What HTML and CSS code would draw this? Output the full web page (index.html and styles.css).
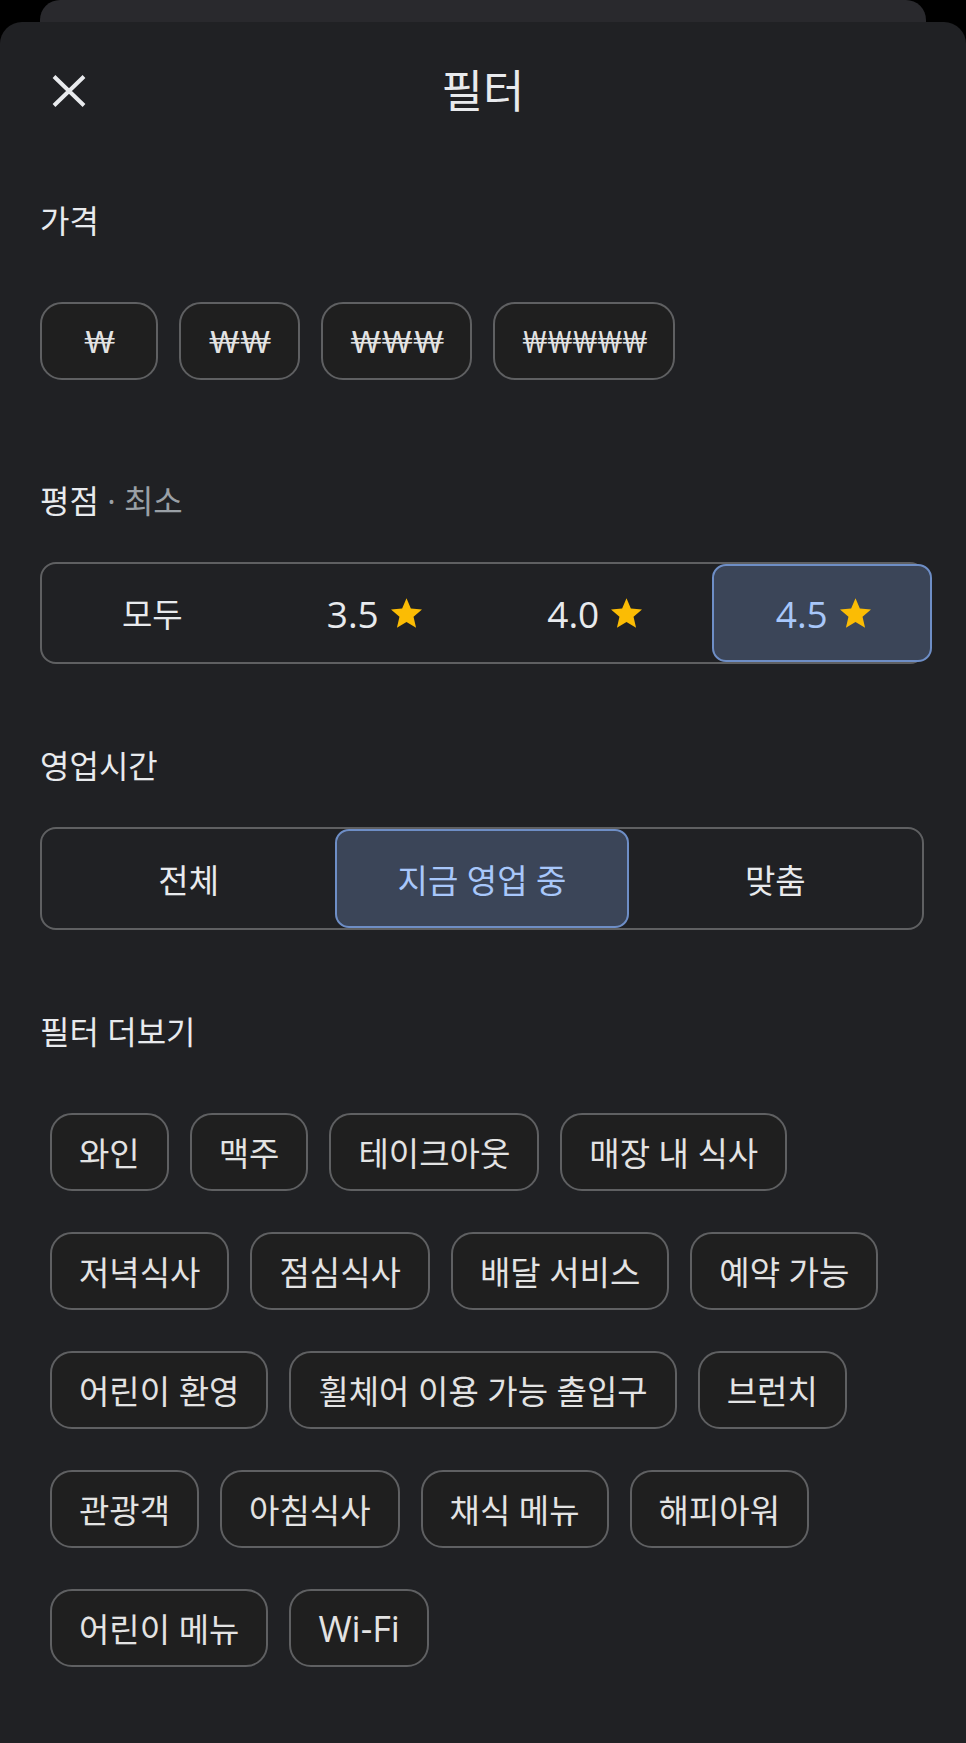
FILE: index.html
```html
<!DOCTYPE html>
<html lang="ko">
<head>
    <meta charset="UTF-8">
    <meta name="viewport" content="width=device-width, initial-scale=1.0">
    <title>필터</title>
    <link rel="stylesheet" href="styles.css">
</head>
<body>
    <div class="back-card"></div>

    <div class="sheet">
        <header class="sheet-header">
            <button class="close-button" aria-label="닫기">
                <svg width="34" height="32" viewBox="0 0 34 32">
                    <path d="M2 1.5 L32 30.5 M32 1.5 L2 30.5" stroke="#e8eaed" stroke-width="4" fill="none"/>
                </svg>
            </button>
            <h1>필터</h1>
            <span></span>
        </header>

        <section class="filter-section">
            <h2>가격</h2>
            <div class="price-row">
                <button class="chip price-chip">₩</button>
                <button class="chip price-chip">₩₩</button>
                <button class="chip price-chip">₩₩₩</button>
                <button class="chip price-chip wide"><span class="squeeze">₩₩₩₩₩</span></button>
            </div>
        </section>

        <section class="filter-section">
            <h2>평점 <span class="muted">· 최소</span></h2>
            <div class="segmented rating">
                <button class="segment">모두</button>
                <button class="segment"><span class="num">3.5</span><svg class="star" viewBox="2 2 20 19"><path d="M12 17.27L18.18 21l-1.64-7.03L22 9.24l-7.19-.61L12 2 9.19 8.63 2 9.24l5.46 4.73L5.82 21z"/></svg></button>
                <button class="segment"><span class="num">4.0</span><svg class="star" viewBox="2 2 20 19"><path d="M12 17.27L18.18 21l-1.64-7.03L22 9.24l-7.19-.61L12 2 9.19 8.63 2 9.24l5.46 4.73L5.82 21z"/></svg></button>
                <button class="segment selected shifted"><span class="num">4.5</span><svg class="star" viewBox="2 2 20 19"><path d="M12 17.27L18.18 21l-1.64-7.03L22 9.24l-7.19-.61L12 2 9.19 8.63 2 9.24l5.46 4.73L5.82 21z"/></svg></button>
            </div>
        </section>

        <section class="filter-section">
            <h2>영업시간</h2>
            <div class="segmented hours">
                <button class="segment">전체</button>
                <button class="segment selected">지금 영업 중</button>
                <button class="segment">맞춤</button>
            </div>
        </section>

        <section class="filter-section more">
            <h2>필터 더보기</h2>
            <div class="chip-wrap">
                <button class="chip">와인</button>
                <button class="chip">맥주</button>
                <button class="chip">테이크아웃</button>
                <button class="chip">매장 내 식사</button>
                <button class="chip">저녁식사</button>
                <button class="chip">점심식사</button>
                <button class="chip">배달 서비스</button>
                <button class="chip">예약 가능</button>
                <button class="chip">어린이 환영</button>
                <button class="chip">휠체어 이용 가능 출입구</button>
                <button class="chip">브런치</button>
                <button class="chip">관광객</button>
                <button class="chip">아침식사</button>
                <button class="chip">채식 메뉴</button>
                <button class="chip">해피아워</button>
                <button class="chip">어린이 메뉴</button>
                <button class="chip"><span class="latin">Wi-Fi</span></button>
            </div>
        </section>
    </div>
</body>
</html>
```

FILE: styles.css
```css
* {
    box-sizing: border-box;
}

body {
    margin: 0;
    background-color: #000;
    font-family: "Open Sans", "Noto Sans CJK KR", sans-serif;
    color: #e8eaed;
}

button {
    font-family: inherit;
    color: inherit;
    background: none;
    border: none;
    padding: 0;
    margin: 0;
    cursor: pointer;
}

.back-card {
    height: 22px;
    margin: 0 40px;
    background-color: #29292d;
    border-radius: 20px 20px 0 0;
}

.sheet {
    min-height: 1721px;
    padding: 0 40px;
    background-color: #202124;
    border-radius: 22px 22px 0 0;
}

.sheet-header {
    display: grid;
    grid-template-columns: 1fr auto 1fr;
    align-items: center;
    height: 138px;
    padding: 0 12px;
}

.close-button {
    display: flex;
    width: 34px;
    height: 32px;
}

h1 {
    margin: 0;
    font-size: 45px;
    font-weight: 400;
    line-height: 52px;
}

h2 {
    margin: 43px 0 0;
    font-size: 32px;
    font-weight: 400;
    line-height: 36px;
}

.filter-section + .filter-section h2 {
    margin-top: 103px;
}

.filter-section + .filter-section + .filter-section h2 {
    margin-top: 84px;
}

.filter-section.more h2 {
    margin-top: 83px;
}

.muted {
    color: #9aa0a6;
}

/* chips */
.chip {
    display: inline-flex;
    align-items: center;
    justify-content: center;
    height: 78px;
    padding: 0 27px;
    border: 2px solid #5f6062;
    border-radius: 22px;
    background-color: #1f1f1f;
    color: #e3e3e3;
    font-size: 33px;
    white-space: nowrap;
}

.price-row {
    display: flex;
    gap: 21px;
    margin-top: 63px;
}

.price-chip {
    min-width: 118px;
    font-family: Lato, "Open Sans", sans-serif;
    font-size: 31px;
    letter-spacing: -1.5px;
}

.price-chip.wide {
    width: 182px;
}

.squeeze {
    display: inline-block;
    transform: scaleX(0.8);
}

.chip-wrap {
    display: flex;
    flex-wrap: wrap;
    gap: 41px 21px;
    margin-top: 63px;
    padding-left: 10px;
}

.latin {
    font-size: 36px;
}

/* segmented controls */
.segmented {
    display: grid;
    margin-top: 43px;
    border: 2px solid #5f6062;
    border-radius: 16px;
}

.segmented.rating {
    grid-template-columns: repeat(4, 1fr);
    height: 102px;
}

.segmented.hours {
    grid-template-columns: repeat(3, 1fr);
    height: 103px;
    margin-right: 2px;
}

.segment {
    display: flex;
    align-items: center;
    justify-content: center;
    gap: 12px;
    font-size: 33px;
    color: #e8eaed;
    border: 2px solid transparent;
    border-radius: 14px;
}

.segment.selected {
    background-color: #3b4558;
    border-color: #6e8ec6;
    color: #a8c7fa;
}

.segment.shifted {
    margin: 0 -8px 0 8px;
}

.num {
    font-size: 37px;
    margin-left: 3px;
}

.star {
    width: 31px;
    height: 30px;
    fill: #fbbc04;
}
```
